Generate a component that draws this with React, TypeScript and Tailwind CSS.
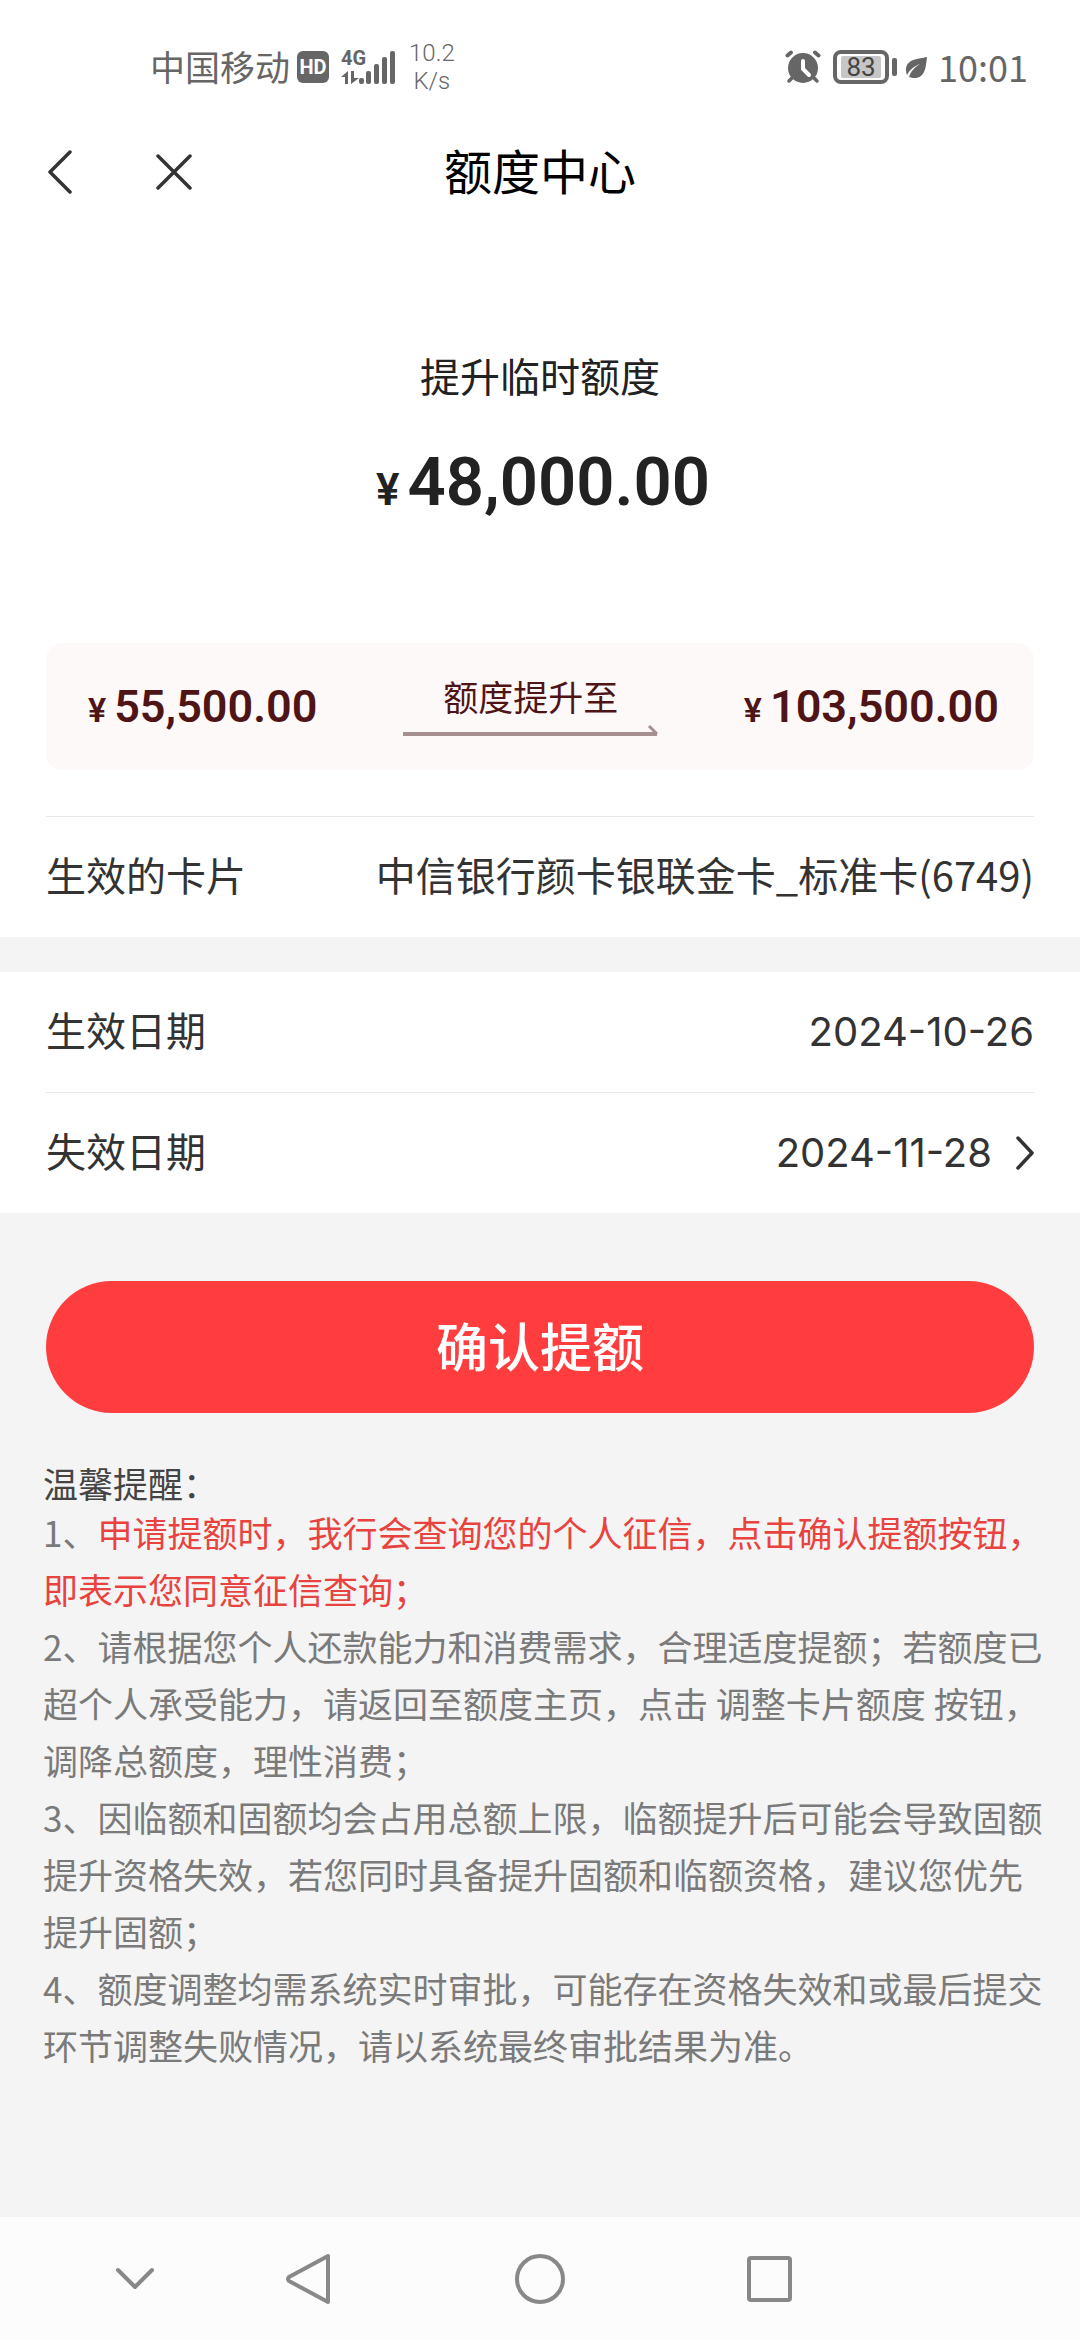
import type { ReactNode } from "react";

function StatusBar() {
  return (
    <div className="flex h-[112px] items-center justify-between pt-[22px] pl-[150px] pr-[52px] text-[#666666]">
      <div className="flex items-center">
        <span className="pb-[2px] text-[35px] leading-[40px]">中国移动</span>
        <span className="ml-[7px] flex h-[32px] w-[32px] items-center justify-center rounded-[6px] bg-[#666666] font-['Roboto',sans-serif] text-[20px] font-bold text-white">
          HD
        </span>
        <div className="ml-[12px] flex h-[34px] items-end">
          <div className="flex w-[18px] flex-col gap-1">
            <span className="font-['Roboto',sans-serif] text-[20px] leading-[18px] font-bold">4G</span>
            <svg viewBox="0 0 18 13" className="h-[13px] w-[18px]" fill="currentColor">
              <path d="M0 6 7 0v13H4V6zM10 0h3v7h5l-8 6z" />
            </svg>
          </div>
          <svg viewBox="0 0 36 34" className="h-[34px] w-[36px]" fill="currentColor">
            <rect x="0" y="28" width="5" height="6" rx="2" />
            <rect x="7" y="21" width="5" height="13" rx="2" />
            <rect x="15" y="14" width="5" height="20" rx="2" />
            <rect x="23" y="7" width="5" height="27" rx="2" />
            <rect x="31" y="1" width="5" height="33" rx="2" />
          </svg>
        </div>
        <div className="ml-[14px] flex flex-col items-center font-['Roboto',sans-serif] text-[24px] leading-[28px] font-light">
          <span>10.2</span>
          <span>K/s</span>
        </div>
      </div>
      <div className="flex items-center">
        <svg viewBox="0 0 36 34" className="h-[34px] w-[36px]" fill="none" stroke="currentColor" strokeLinecap="round">
          <circle cx="18" cy="18" r="15" fill="currentColor" stroke="none" />
          <path d="M2.500 5.500 6 2.500M33.500 5.500 30 2.500" strokeWidth="4" />
          <path d="M7 28l-3 3M29 28l3 3" strokeWidth="3.500" />
          <path d="M18 11v8l6 6" stroke="white" strokeWidth="4" />
        </svg>
        <div className="ml-3 flex h-[34px] w-[56px] items-center justify-center rounded-[8px] border-4 border-[#666666]">
          <span className="flex h-[22px] w-[40px] items-center justify-center rounded-[2px] bg-[#c6c6c6] font-['Roboto',sans-serif] text-[26px] text-[#444444]">83</span>
        </div>
        <span className="ml-[3px] h-[18px] w-[5px] rounded-[2px] bg-[#666666]" />
        <svg viewBox="0 0 24 24" className="ml-[7px] h-[24px] w-[24px]" fill="currentColor">
          <path d="M23 2C14 4 3 4 2 14c0 2 0 4 1 6C6 14 11 11 16 9c-5 3-9 7-11 13 3 1 8 2 12-1 5-4 5-12 6-19z" />
        </svg>
        <span className="ml-[10px] pb-[2px] text-[36px] leading-[40px]">10:01</span>
      </div>
    </div>
  );
}

function Header() {
  return (
    <header className="grid h-[120px] grid-cols-3 items-center px-[36px]">
      <div className="flex items-center gap-[62px]">
        <button type="button" aria-label="返回" className="flex h-[50px] w-[48px] items-center justify-center">
          <svg viewBox="0 0 24 44" className="h-[44px] w-[24px]" fill="none" stroke="#333333" strokeWidth="3.500" strokeLinecap="round" strokeLinejoin="round">
            <path d="M22 2 2 22l20 20" />
          </svg>
        </button>
        <button type="button" aria-label="关闭" className="flex h-[50px] w-[56px] items-center justify-center">
          <svg viewBox="0 0 36 36" className="h-[36px] w-[36px]" fill="none" stroke="#333333" strokeWidth="3.500" strokeLinecap="round">
            <path d="M2 2l32 32M34 2 2 34" />
          </svg>
        </button>
      </div>
      <h1 className="pb-[6px] text-center text-[48px] leading-[60px] text-black">额度中心</h1>
    </header>
  );
}

function Row({ label, children }: { label: string; children: ReactNode }) {
  return (
    <div className="flex h-[120px] items-center justify-between text-[40px] leading-[56px] text-[#333333]">
      <span className="pb-[6px]">{label}</span>
      {children}
    </div>
  );
}

function LimitAmount({ value }: { value: string }) {
  return (
    <p className="flex items-baseline gap-[8px] font-['Roboto',sans-serif] font-semibold">
      <span className="text-[34px] leading-[40px]">¥</span>
      <span className="text-[45px] leading-[56px]">{value}</span>
    </p>
  );
}

function LimitChange() {
  return (
    <div className="flex h-[127px] items-center justify-between rounded-[16px] bg-[#fef9f9] pl-[42px] pr-[35px] text-[#4f1516]">
      <LimitAmount value="55,500.00" />
      <div className="flex w-[256px] flex-col items-center">
        <span className="text-[35px] leading-[40px]">额度提升至</span>
        <svg viewBox="0 0 256 14" className="mt-[7px] h-[14px] w-[256px]" fill="none" stroke="#a58f90">
          <path d="M0 11h254" strokeWidth="4" />
          <path d="M246 3l8 8" strokeWidth="3" />
        </svg>
      </div>
      <LimitAmount value="103,500.00" />
    </div>
  );
}

function Tips() {
  return (
    <section className="mt-[50px] pl-[43px] pr-[35px] text-[35px] leading-[57px] text-[#7a7a7a]">
      <h2 className="leading-[40px] text-[#444444]">温馨提醒：</h2>
      <p>
        1、<span className="text-[#e8433f]">申请提额时，我行会查询您的个人征信，点击确认提额按钮，即表示您同意征信查询；</span>
      </p>
      <p>2、请根据您个人还款能力和消费需求，合理适度提额；若额度已超个人承受能力，请返回至额度主页，点击 调整卡片额度 按钮，调降总额度，理性消费；</p>
      <p>3、因临额和固额均会占用总额上限，临额提升后可能会导致固额提升资格失效，若您同时具备提升固额和临额资格，建议您优先提升固额；</p>
      <p>4、额度调整均需系统实时审批，可能存在资格失效和或最后提交环节调整失败情况，请以系统最终审批结果为准。</p>
    </section>
  );
}

function NavBar() {
  return (
    <nav className="flex h-[123px] items-center bg-[#fcfcfc] pl-[110px] text-[#888888]">
      <button type="button" aria-label="收起" className="w-[50px]">
        <svg viewBox="0 0 50 52" className="w-full" fill="none" stroke="currentColor" strokeWidth="4" strokeLinecap="round" strokeLinejoin="round">
          <path d="M8 17l17 17 17-17" />
        </svg>
      </button>
      <button type="button" aria-label="返回" className="ml-[123px] w-[50px]">
        <svg viewBox="0 0 50 52" className="w-full" fill="none" stroke="currentColor" strokeWidth="4" strokeLinejoin="round">
          <path d="M45 3v46L6 28q-2-2 0-4z" />
        </svg>
      </button>
      <button type="button" aria-label="主页" className="ml-[182px] w-[50px]">
        <svg viewBox="0 0 50 52" className="w-full" fill="none" stroke="currentColor" strokeWidth="4">
          <circle cx="25" cy="26" r="23" />
        </svg>
      </button>
      <button type="button" aria-label="最近任务" className="ml-[179px] w-[50px]">
        <svg viewBox="0 0 50 52" className="w-full" fill="none" stroke="currentColor" strokeWidth="4">
          <rect x="5" y="5" width="41" height="42" rx="2" />
        </svg>
      </button>
    </nav>
  );
}

export default function App() {
  return (
    <div className="flex min-h-screen flex-col bg-[#f4f4f4] font-['Noto_Sans_CJK_SC',sans-serif]">
      <div className="bg-white">
        <StatusBar />
        <Header />
        <div className="px-[46px]">
          <h2 className="mt-[113px] text-center text-[40px] leading-[60px] text-[#222222]">提升临时额度</h2>
          <p className="mt-[37px] mb-[121px] flex items-baseline justify-center gap-[8px] pl-[6px] font-['Roboto',sans-serif] font-semibold text-[#222222]">
            <span className="text-[44px] leading-[44px]">¥</span>
            <span className="text-[67px] leading-[80px]">48,000.00</span>
          </p>
          <LimitChange />
          <div className="mt-[46px] border-t border-[#e8e8e8]">
            <Row label="生效的卡片">
              <span className="pb-[6px]">中信银行颜卡银联金卡_标准卡(6749)</span>
            </Row>
          </div>
        </div>
      </div>

      <div className="mt-[35px] bg-white px-[46px]">
        <Row label="生效日期">
          <span className="font-['Inter',sans-serif]">2024-10-26</span>
        </Row>
        <div className="border-t border-[#e8e8e8]">
          <Row label="失效日期">
            <button type="button" className="flex items-center gap-[24px]">
              <span className="font-['Inter',sans-serif]">2024-11-28</span>
              <svg viewBox="0 0 18 34" className="h-[34px] w-[18px]" fill="none" stroke="#333333" strokeWidth="3.500" strokeLinecap="round" strokeLinejoin="round">
                <path d="M2 2l14 15L2 32" />
              </svg>
            </button>
          </Row>
        </div>
      </div>

      <main className="flex-1">
        <div className="px-[46px] pt-[68px]">
          <button type="button" className="h-[132px] w-full rounded-full bg-[#ff3d3f] pb-[4px] text-[52px] font-medium text-white">
            确认提额
          </button>
        </div>
        <Tips />
      </main>

      <NavBar />
    </div>
  );
}
